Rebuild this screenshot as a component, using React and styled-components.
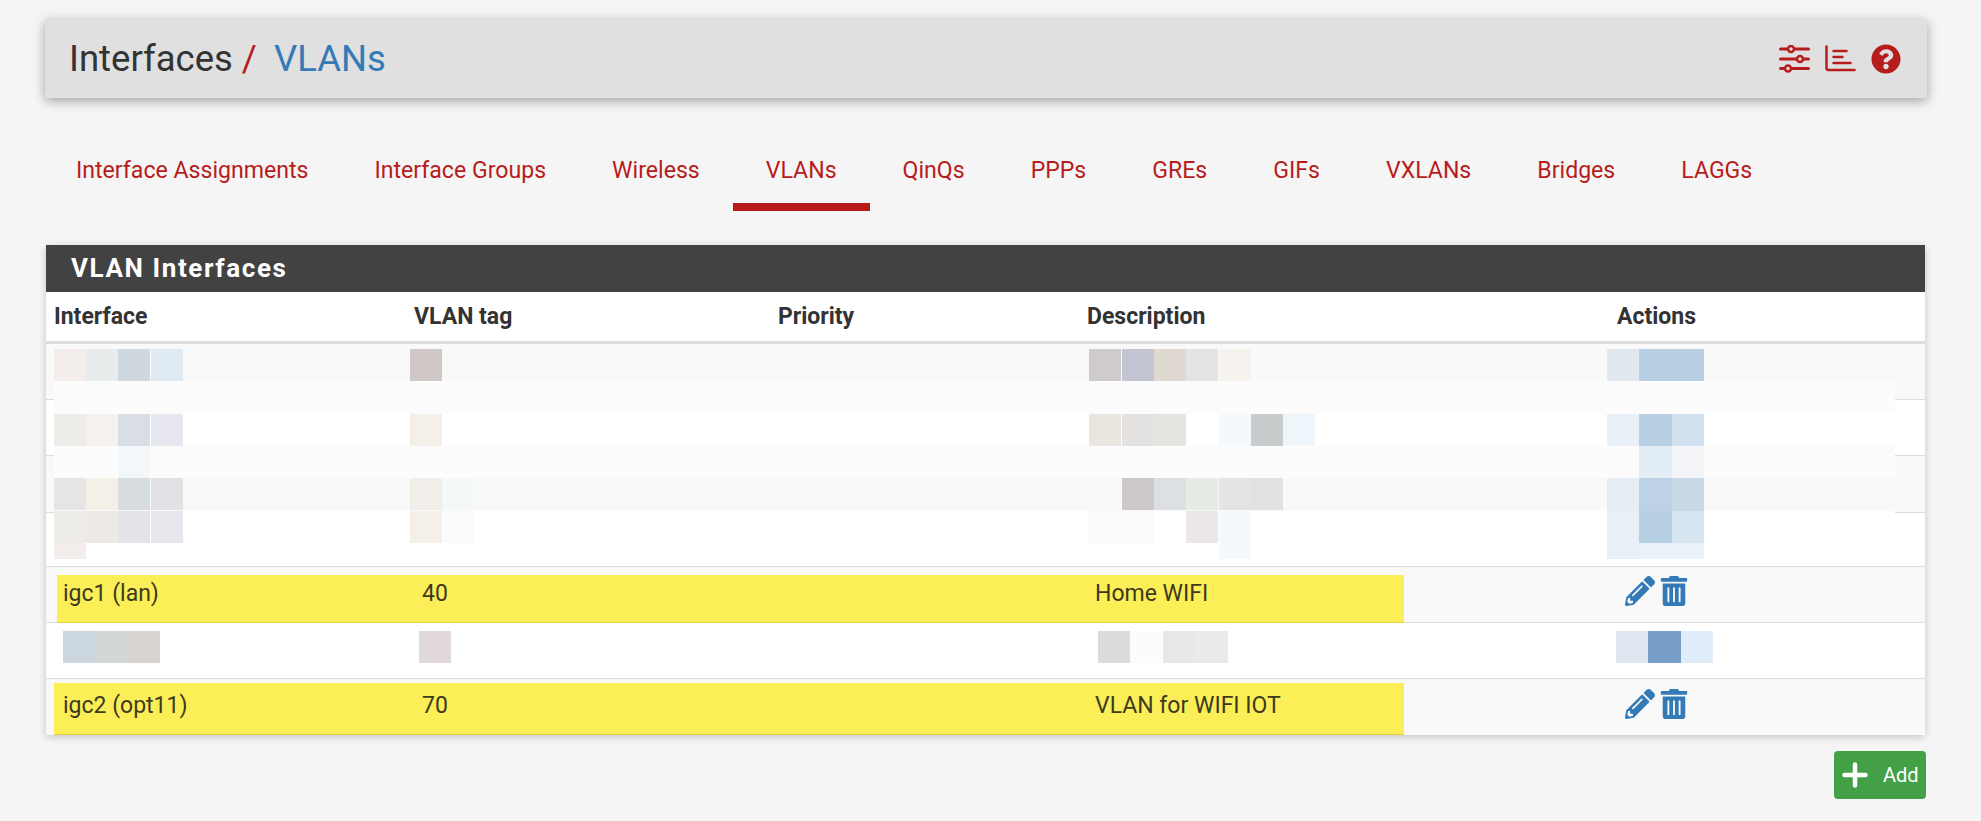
import React from 'react';
import styled, { createGlobalStyle } from 'styled-components';
import { FaPencilAlt, FaTrashAlt, FaQuestionCircle } from 'react-icons/fa';

const GlobalStyle = createGlobalStyle`
  html, body {
    margin: 0;
    padding: 0;
    background: #f5f5f5;
    font-family: Roboto, "Liberation Sans", sans-serif;
    color: #333;
  }
`;

const Page = styled.div`
  width: 1981px;
  height: 821px;
  overflow: hidden;
  box-sizing: border-box;
  padding: 19px 56px 0 46px;
`;

const Header = styled.header`
  height: 79px;
  margin-right: -2px;
  margin-left: -1px;
  padding: 0 26px 0 24px;
  display: flex;
  align-items: center;
  justify-content: space-between;
  background: #e0e0e0;
  border-radius: 3px;
  box-shadow: 0 3px 12px rgba(0, 0, 0, 0.35);
`;

const Crumbs = styled.h1`
  margin: 0;
  font-size: 36.5px;
  font-weight: 400;
  display: flex;
  gap: 9px;
`;

const Slash = styled.span`
  color: #b71c1c;
  margin-right: 8px;
`;

const CurrentCrumb = styled.span`
  color: #337ab7;
`;

const HeaderIcons = styled.div`
  display: flex;
  align-items: center;
  gap: 15px;
  color: #b71c1c;
`;

const Tabs = styled.nav`
  display: flex;
  margin-left: -3px;
  padding-top: 37px;
`;

const Tab = styled.a`
  height: 76px;
  padding: 2px 33px 0;
  display: flex;
  align-items: center;
  font-size: 23.1px;
  color: #b71c1c;
  border-bottom: ${(p) => (p.$active ? '8px solid #b71c1c' : '8px solid transparent')};
  box-sizing: border-box;
`;

const Panel = styled.section`
  margin-top: 34px;
  background: #fff;
  box-shadow: 0 2px 8px rgba(0, 0, 0, 0.2);
`;

const PanelTitle = styled.h2`
  margin: 0;
  height: 47px;
  box-sizing: border-box;
  padding: 0 25px 2px;
  display: flex;
  align-items: center;
  background: #424242;
  color: #fff;
  font-size: 26px;
  font-weight: 700;
  letter-spacing: 1.6px;
`;

const COLUMNS = '360px 364px 309px 530px 1fr';

const HeadRow = styled.div`
  display: grid;
  grid-template-columns: ${COLUMNS};
  height: 49px;
  align-items: center;
  border-bottom: 3px solid #ddd;
  font-size: 23px;
  font-weight: 700;
`;

const HeadCell = styled.div`
  padding-left: 8px;
`;

const Body = styled.div`
  position: relative;
`;

const Row = styled.div`
  position: relative;
  display: grid;
  grid-template-columns: ${COLUMNS};
  height: ${(p) => p.$h}px;
  align-items: center;
  box-sizing: border-box;
  background: ${(p) => (p.$odd ? '#f9f9f9' : '#fff')};
  border-bottom: ${(p) => (p.$last ? 'none' : '1px solid #ddd')};
  font-size: 23px;
`;

const Highlight = styled.div`
  position: absolute;
  left: ${(p) => p.$left}px;
  top: ${(p) => p.$top}px;
  width: ${(p) => 1404 - 46 - p.$left}px;
  height: ${(p) => p.$height}px;
  background: #fbee57;
  border-bottom: 1px solid #e3d243;
  box-sizing: border-box;
`;

const Cell = styled.div`
  position: relative;
  padding: 0 0 3px 16px;
  color: #3d3a1e;

  ${Highlight} + & {
    padding-left: 17px;
  }
`;

const ActionCell = styled.div`
  position: relative;
  display: flex;
  align-items: flex-start;
  gap: 4px;
  padding: 0 0 7px 16px;
  color: #337ab7;
`;

// redacted parts of the screenshot, a mosaic lying over the rows
const Wash = styled.div`
  position: absolute;
  left: 8px;
  top: ${(p) => p.$y - 344}px;
  width: 1841px;
  height: ${(p) => p.$h - p.$y}px;
  background: ${(p) => p.$c};
`;

const Block = styled.div`
  position: absolute;
  left: ${(p) => p.$x - 46}px;
  top: ${(p) => p.$y - 344}px;
  width: ${(p) => p.$w || 32}px;
  height: ${(p) => p.$h || 32}px;
  background: ${(p) => p.$c};
`;

const AddButton = styled.button`
  position: absolute;
  left: 1834px;
  top: 751px;
  width: 92px;
  height: 48px;
  display: flex;
  align-items: center;
  gap: 15px;
  padding: 0 0 0 8px;
  border: none;
  border-radius: 4px;
  background: #43a047;
  color: #fff;
  font-family: inherit;
  font-size: 20px;
`;

const SlidersIcon = () => (
  <svg width="31" height="28" viewBox="0 0 31 28" fill="none" stroke="currentColor" strokeWidth="3" strokeLinecap="round">
    <path d="M1.5 4h28M1.5 14h28M1.5 23.5h28" />
    <circle cx="12" cy="4" r="3" fill="#e0e0e0" strokeWidth="2.5" />
    <circle cx="21" cy="14" r="3" fill="#e0e0e0" strokeWidth="2.5" />
    <circle cx="9" cy="23.5" r="3" fill="#e0e0e0" strokeWidth="2.5" />
  </svg>
);

const ChartIcon = () => (
  <svg width="31" height="28" viewBox="0 0 31 28" fill="none" stroke="currentColor" strokeWidth="2.5" strokeLinecap="round">
    <path d="M1.5 1.5v21.5a2 2 0 0 0 2 2h26" />
    <path d="M8.5 6h13M8.5 12h9M8.5 18h17" />
  </svg>
);

const mosaic = [
  [54, 349, '#f3eeeb'], [86, 349, '#e9eced'], [118, 349, '#d0d8df'], [151, 349, '#e0eaf2'],
  [410, 349, '#d0c8c7'],
  [1089, 349, '#cfcbcb'], [1122, 349, '#c3c5d2'], [1154, 349, '#e0d9d2'], [1186, 349, '#e1e3e5'], [1219, 349, '#f6f3ee'],
  [54, 414, '#eeece9'], [86, 414, '#f5f1ec'], [118, 414, '#d9dde4'], [151, 414, '#e7e8ef'],
  [410, 414, '#f4efe9'],
  [1089, 414, '#e9e5df'], [1122, 414, '#e3e2e1'], [1154, 414, '#e4e4e0'], [1219, 414, '#f5f8fc'], [1251, 414, '#c8cccc'], [1283, 414, '#eff6fb'],
  [118, 446, '#f4f7fa'],
  [54, 478, '#e6e5e3'], [86, 478, '#f4f0e8'], [118, 478, '#d8dde2'], [151, 478, '#e1e1e6'],
  [410, 478, '#f1eeea'], [442, 478, '#f5f8f8'],
  [1122, 478, '#cdc8cb'], [1154, 478, '#dce0e4'], [1186, 478, '#e6ebe6'], [1219, 478, '#e4e4e6'], [1251, 478, '#e2e2e2'],
  [54, 511, '#eeece9'], [86, 511, '#ece9e7'], [118, 511, '#e4e3e7'], [151, 511, '#e7e7ee'],
  [410, 511, '#f5efe9'], [442, 511, '#fafcfc'],
  [1089, 511, '#fafbfd'], [1122, 511, '#fdfbf9'], [1186, 511, '#ece7e7'], [1219, 511, '#f5f9fc', 32, 48],
  [54, 543, '#f3eeeb', 32, 16],
  [1607, 349, '#e1e8f0'], [1639, 349, '#b7cee3', 65, 32],
  [1607, 414, '#e9f0f8'], [1639, 414, '#b8cfe4', 33], [1672, 414, '#d0e0ee'],
  [1639, 446, '#e2edf5', 33], [1672, 446, '#f3f5f9'],
  [1607, 478, '#e6edf5', 32, 33], [1639, 478, '#bdd2e5', 33, 33], [1672, 478, '#c8d9e7', 32, 33],
  [1607, 511, '#e8eff7', 32, 48], [1639, 511, '#b7cfe3', 33], [1672, 511, '#d6e5f0'],
  [1639, 543, '#eaf1f9', 65, 16],
  [63, 631, '#ccd6de'], [95, 631, '#d4d7d8', 33], [128, 631, '#d9d4d0'],
  [419, 631, '#e2d9db'],
  [1098, 631, '#dddcdd'], [1130, 631, '#fdfcfa', 33], [1163, 631, '#e8e8e6'], [1195, 631, '#e9eaec', 33],
  [1616, 631, '#dfe7f0'], [1648, 631, '#769ec8', 33], [1681, 631, '#e0ecf8'],
];

const washes = [
  [381, 414, '#fcfcfc'],
  [446, 478, '#fcfcfc'],
  [478, 511, '#f9f9f9'],
  [511, 565, '#fff'],
];

const tabs = ['Interface Assignments', 'Interface Groups', 'Wireless', 'VLANs', 'QinQs', 'PPPs', 'GREs', 'GIFs', 'VXLANs', 'Bridges', 'LAGGs'];

const Actions = () => (
  <ActionCell>
    <FaPencilAlt size={30} />
    <FaTrashAlt size={30} />
  </ActionCell>
);

const DataRow = ({ odd, height, left, top, hlHeight, iface, tag, desc, last }) => (
  <Row $h={height} $odd={odd} $last={last}>
    <Highlight $left={left} $top={top} $height={hlHeight} />
    <Cell>{iface}</Cell>
    <Cell>{tag}</Cell>
    <Cell />
    <Cell>{desc}</Cell>
    <Actions />
  </Row>
);

const App = () => (
  <Page>
    <GlobalStyle />
    <Header>
      <Crumbs>
        <span>Interfaces</span>
        <Slash>/</Slash>
        <CurrentCrumb>VLANs</CurrentCrumb>
      </Crumbs>
      <HeaderIcons>
        <SlidersIcon />
        <ChartIcon />
        <FaQuestionCircle size={30} />
      </HeaderIcons>
    </Header>
    <Tabs>
      {tabs.map((t) => (
        <Tab key={t} $active={t === 'VLANs'}>{t}</Tab>
      ))}
    </Tabs>
    <Panel>
      <PanelTitle>VLAN Interfaces</PanelTitle>
      <HeadRow>
        <HeadCell>Interface</HeadCell>
        <HeadCell>VLAN tag</HeadCell>
        <HeadCell>Priority</HeadCell>
        <HeadCell>Description</HeadCell>
        <HeadCell>Actions</HeadCell>
      </HeadRow>
      <Body>
        <Row $h={56} $odd />
        <Row $h={56} />
        <Row $h={57} $odd />
        <Row $h={54} />
        <DataRow odd height={56} left={11} top={8} hlHeight={48} iface="igc1 (lan)" tag="40" desc="Home WIFI" />
        <Row $h={56} />
        <DataRow odd height={56} left={8} top={4} hlHeight={52} iface="igc2 (opt11)" tag="70" desc="VLAN for WIFI IOT" last />
        {washes.map(([y, h, c]) => (
          <Wash key={y} $y={y} $h={h} $c={c} />
        ))}
        {mosaic.map(([x, y, c, w, h]) => (
          <Block key={`${x}-${y}`} $x={x} $y={y} $c={c} $w={w} $h={h} />
        ))}
      </Body>
    </Panel>
    <AddButton>
      <svg width="26" height="26" viewBox="0 0 26 26" stroke="currentColor" strokeWidth="4.5" strokeLinecap="round">
        <path d="M13 2.5v21M2.5 13h21" />
      </svg>
      Add
    </AddButton>
  </Page>
);

export default App;
